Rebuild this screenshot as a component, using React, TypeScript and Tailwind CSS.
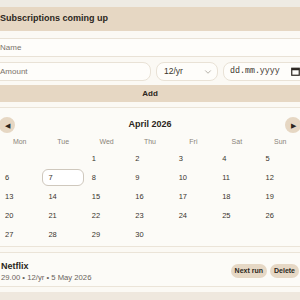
import { ChevronDown } from "lucide-react";

const days = ["Mon", "Tue", "Wed", "Thu", "Fri", "Sat", "Sun"];

// April 2026 starts on a Wednesday
const cells: (number | null)[] = [
  null, null,
  ...Array.from({ length: 30 }, (_, i) => i + 1),
  null, null, null,
];

function CalendarIcon() {
  return (
    <svg width="9" height="9" viewBox="0 0 9 9" className="text-[#2b2620]">
      <rect x="0.75" y="1.25" width="7.5" height="7" fill="none" stroke="currentColor" strokeWidth="1.2" />
      <rect x="0.75" y="1.25" width="7.5" height="2" fill="currentColor" />
    </svg>
  );
}

export default function App() {
  return (
    <div
      className="h-[300px] w-[300px] overflow-hidden bg-[#eeebe4] text-[#2b2620]"
      style={{ fontFamily: "'Liberation Sans', Arial, sans-serif" }}
    >
      <div className="-ml-[9px] w-[318px] pt-[7px]">
        <section className="bg-[#fbf9f4]">
          <div className="flex h-[24px] items-center bg-[#e6d7c3] px-[9px] text-[9px] font-bold">
            Subscriptions coming up
          </div>

          <div className="flex flex-col pt-[7px]">
            <div className="flex h-[19px] items-center rounded-lg border border-[#e9e2d6] bg-[#fefdfa] px-[8px] text-[8px] text-[#7a736a]">
              Name
            </div>
            <div className="mt-[5px] flex gap-[5px]">
              <div className="flex h-[19px] flex-1 items-center rounded-lg border border-[#e9e2d6] bg-[#fefdfa] px-[8px] text-[8px] text-[#7a736a]">
                Amount
              </div>
              <div className="flex h-[19px] w-[62px] items-center justify-between rounded-lg border border-[#e9e2d6] bg-[#fefdfa] pl-[7px] pr-[4px] text-[8.5px] text-[#3a342d]">
                12/yr
                <ChevronDown className="h-[10px] w-[10px] text-[#8a8379]" strokeWidth={1.5} />
              </div>
              <div className="flex h-[19px] w-[86px] items-center justify-between rounded-lg border border-[#e9e2d6] bg-[#fefdfa] pl-[6px] pr-[8px] text-[8.3px] text-[#3a342d]">
                <span style={{ fontFamily: "'Liberation Mono', monospace" }}>dd.mm.yyyy</span>
                <CalendarIcon />
              </div>
            </div>
            <button className="mt-[4px] flex h-[17px] items-center justify-center bg-[#e6d7c3] text-[8px] font-bold">
              Add
            </button>
          </div>

          <div className="mt-[5px] rounded-lg border border-[#ebe4d8] bg-[#fcfbf7] px-[7px] pb-[3px] pt-[9px]">
            <div className="flex h-[16px] items-center justify-between">
              <button className="flex h-[16px] w-[16px] items-center justify-center rounded-full bg-[#e6d7c3] text-[7px] leading-none">
                ◀
              </button>
              <div className="text-[9px] font-bold">April 2026</div>
              <button className="flex h-[16px] w-[16px] items-center justify-center rounded-full bg-[#e6d7c3] text-[7px] leading-none">
                ▶
              </button>
            </div>
            <div className="mt-[3px] grid grid-cols-7 gap-x-[2px]">
              {days.map((d) => (
                <div key={d} className="flex h-[12px] items-center justify-center text-[7px] text-[#8a8379]">
                  {d}
                </div>
              ))}
            </div>
            <div className="mt-[2px] grid grid-cols-7 gap-x-[2px] gap-y-[2px]">
              {cells.map((n, i) => (
                <div
                  key={i}
                  className={
                    n === 7
                      ? "flex h-[17px] items-center rounded-md border border-[#cfc8bd] bg-white px-[5px] text-[7.5px] text-[#3a342d]"
                      : "flex h-[17px] items-center rounded-md border border-transparent px-[5px] text-[7.5px] text-[#3a342d]"
                  }
                >
                  {n ?? ""}
                </div>
              ))}
            </div>
          </div>

          <div className="mt-[5px] flex h-[35px] items-center justify-between rounded-lg border border-[#ebe4d8] bg-[#fcfbf7] px-[9px]">
            <div className="flex flex-col pt-[3px]">
              <div className="text-[9px] font-bold leading-[12px]">Netflix</div>
              <div className="text-[7.7px] leading-[11px] text-[#6b645c]">29.00 • 12/yr • 5 May 2026</div>
            </div>
            <div className="mt-[3px] flex gap-[3px]">
              <button className="flex h-[14px] items-center rounded-full bg-[#e6d8c5] px-[4px] text-[7px] font-bold">
                Next run
              </button>
              <button className="flex h-[14px] items-center rounded-full bg-[#e6d8c5] px-[4px] text-[7px] font-bold">
                Delete
              </button>
            </div>
          </div>
          <div className="h-[5px]" />
        </section>
        <div className="h-[20px] bg-[#efe8de]" />
      </div>
    </div>
  );
}
